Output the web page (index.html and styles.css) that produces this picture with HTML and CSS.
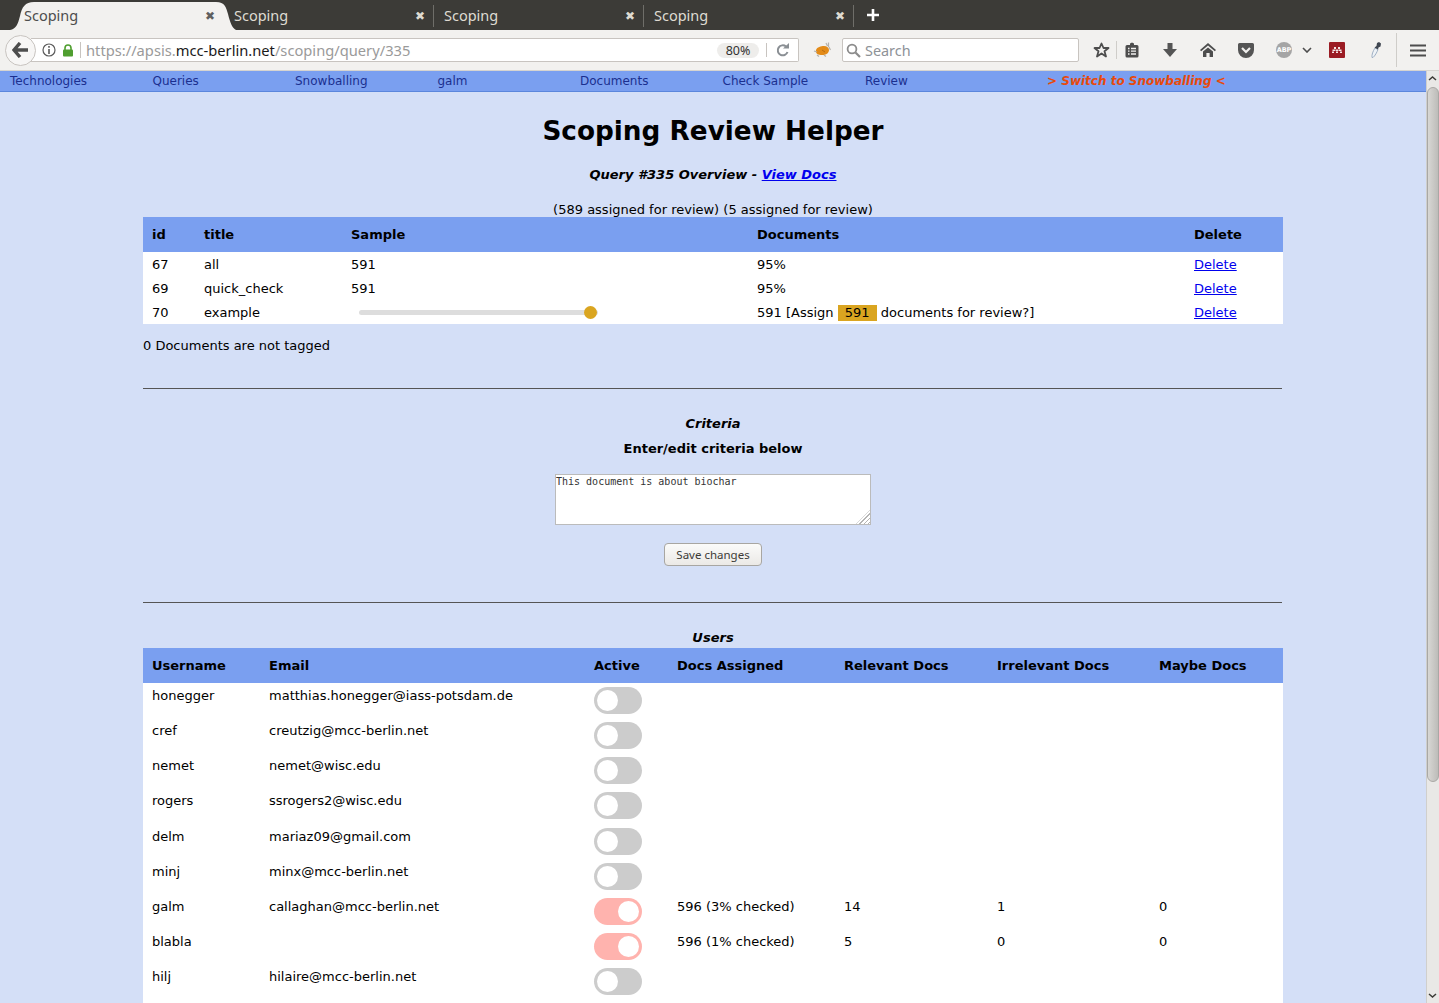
FILE: index.html
```html
<!DOCTYPE html>
<html lang="en">
<head>
    <meta charset="UTF-8">
    <title>Scoping</title>
    <link rel="stylesheet" href="styles.css">
</head>
<body>
    <div class="tabbar">
        <div class="tab active">
            <svg class="tab-shape" width="226" height="30" viewBox="0 0 226 30"><path d="M0 30C6 29 8 24 10 16C12 7 15 2 24 2H206C215 2 216 7 218 14C220 22 222 28 226 30Z" fill="#f2f1ef"/></svg>
            <span class="tab-title">Scoping</span><span class="tab-close">✖</span>
        </div>
        <div class="tab"><span class="tab-title">Scoping</span><span class="tab-close">✖</span></div>
        <div class="tab"><span class="tab-title">Scoping</span><span class="tab-close">✖</span></div>
        <div class="tab"><span class="tab-title">Scoping</span><span class="tab-close">✖</span></div>
        <svg class="new-tab" width="14" height="14" viewBox="0 0 14 14"><path d="M7 1V13M1 7H13" stroke="#fff" stroke-width="2.6"/></svg>
    </div>

    <div class="toolbar">
        <div class="back">
            <svg width="18" height="16" viewBox="0 0 18 16"><path d="M8 1L2 8L8 15M2 8H16" fill="none" stroke="#4d4d4d" stroke-width="3.4"/></svg>
        </div>
        <div class="urlbar">
            <svg class="info" width="14" height="14" viewBox="0 0 14 14"><circle cx="7" cy="7" r="6" fill="none" stroke="#5a5a5a" stroke-width="1.2"/><path d="M7 6V11M7 3V4.8" stroke="#5a5a5a" stroke-width="1.6"/></svg>
            <svg class="lock" width="12" height="13" viewBox="0 0 12 13"><path d="M3 6V4A3 3 0 0 1 9 4V6" fill="none" stroke="#4f9e2f" stroke-width="1.6"/><rect x="1" y="5.5" width="10" height="7" rx="1" fill="#4f9e2f"/></svg>
            <span class="url"><span class="url-dim">https://apsis.</span>mcc-berlin.net<span class="url-dim">/scoping/query/335</span></span>
            <span class="zoom-pill">80%</span>
            <svg class="reload" width="16" height="14" viewBox="0 0 16 14"><path d="M12.5 9A5 5 0 1 1 11 3.5" fill="none" stroke="#8a8f94" stroke-width="2"/><path d="M8 5.5H14V0Z" fill="#8a8f94"/></svg>
        </div>
        <svg class="fox" width="18" height="16" viewBox="0 0 18 16"><path d="M13 1L14.500 4M15.500 0.500L15.500 5M16 5L17.500 8" fill="none" stroke="#b5b2ad" stroke-width="1.200"/><path d="M3 8C4 5 8 4 11 4C14 4 16 6 16 8C16 11 13 13 9 13C5.500 13 2 12 3 8Z" fill="#e38b18"/><path d="M1 9L4 10M4 13L6 14.500M11 13L13 14.500" stroke="#b5b2ad" stroke-width="1.200"/><path d="M9 8L12 10" stroke="#b96d10" stroke-width="1"/></svg>
        <div class="searchbar">
            <svg width="15" height="15" viewBox="0 0 15 15"><circle cx="6" cy="6" r="4.4" fill="none" stroke="#8c8c8c" stroke-width="1.8"/><path d="M9.5 9.5L14 14" stroke="#8c8c8c" stroke-width="2.2"/></svg>
            <span>Search</span>
        </div>
        <svg class="star" width="17" height="16" viewBox="0 0 17 16"><path d="M8.5 1.5L10.5 6H15.5L11.5 9.2L13 14.5L8.5 11.4L4 14.5L5.5 9.2L1.5 6H6.5Z" fill="none" stroke="#4d4d4d" stroke-width="1.8" stroke-linejoin="round"/></svg>
        <span class="tool-sep"></span>
        <svg class="reader" width="14" height="16" viewBox="0 0 14 16"><path d="M2 3H5V1.500L7 0.500L9 1.500V3H12A1.500 1.500 0 0 1 13.500 4.500V14A1.500 1.500 0 0 1 12 15.500H2A1.500 1.500 0 0 1 0.500 14V4.500A1.500 1.500 0 0 1 2 3Z" fill="#4d4d4d"/><path d="M3 6.500H4.500M6 6.500H11M3 9.200H4.500M6 9.200H11M3 12H4.500M6 12H11" stroke="#f2f1ef" stroke-width="1.300"/></svg>
        <svg class="download" width="14" height="14" viewBox="0 0 14 14"><path d="M4.500 0H9.500V6H14L7 14L0 6H4.500Z" fill="#555"/></svg>
        <svg class="home" width="16" height="14" viewBox="0 0 16 14"><path d="M8 0L16 7L14.800 8.200L8 2.400L1.200 8.200L0 7Z" fill="#4d4d4d"/><path d="M3 8.600L8 4.400L13 8.600V14H9.600V10H6.400V14H3Z" fill="#4d4d4d"/></svg>
        <svg class="pocket" width="16" height="15" viewBox="0 0 16 15"><path d="M1.500 0H14.500A1.500 1.500 0 0 1 16 1.500V7A8 8 0 0 1 0 7V1.500A1.500 1.500 0 0 1 1.500 0Z" fill="#555"/><path d="M4 5L8 9L12 5" fill="none" stroke="#f2f1ef" stroke-width="2.200"/></svg>
        <span class="abp">ABP</span>
        <svg class="chevron" width="10" height="6" viewBox="0 0 10 6"><path d="M1 1L5 5L9 1" fill="none" stroke="#4d4d4d" stroke-width="1.600"/></svg>
        <svg class="ublock" width="16" height="16" viewBox="0 0 16 16"><rect width="16" height="16" rx="1" fill="#9b1c24"/><path d="M5 5H7V7H5ZM9 5H11V7H9ZM3.500 7.500H6.500V9H3.500ZM7 7.500H9V9H7ZM9.500 7.500H12.500V9H9.500ZM3 9.500H5V11H3ZM7 9.500H9V11H7ZM11 9.500H13V11H11Z" fill="#f4e6e6"/></svg>
        <svg class="dropper" width="12" height="18" viewBox="0 0 12 18"><path d="M2 16.500C1.500 14 3 10 5 7L8 8.500C7 11 5 15 3 16.500Z" fill="#eef2f6" stroke="#9fb0c4"/><path d="M4.500 6.500L6.500 5L7 2L9 1L11 2.500L10.500 5.500L8.500 6.500L8 8.500Z" fill="#3f4650"/></svg>
        <span class="tool-sep tall"></span>
        <svg class="menu" width="16" height="13" viewBox="0 0 16 13"><path d="M0 1.500H16M0 6.500H16M0 11.500H16" stroke="#4d4d4d" stroke-width="2.200"/></svg>
    </div>

    <div class="viewport">
        <div class="page">
            <ul class="nav">
                <li><a href="#">Technologies</a></li>
                <li><a href="#">Queries</a></li>
                <li><a href="#">Snowballing</a></li>
                <li><a href="#">galm</a></li>
                <li><a href="#">Documents</a></li>
                <li><a href="#">Check Sample</a></li>
                <li><a href="#">Review</a></li>
                <li class="switch"><a href="#">&gt; Switch to Snowballing &lt;</a></li>
            </ul>

            <div class="content">
                <h1>Scoping Review Helper</h1>
                <p class="subtitle">Query #335 Overview - <a href="#">View Docs</a></p>
                <p class="assigned">(589 assigned for review) (5 assigned for review)</p>

                <table class="data tags">
                    <colgroup>
                        <col class="c-id"><col class="c-title"><col class="c-sample"><col class="c-docs"><col class="c-del">
                    </colgroup>
                    <thead>
                        <tr><th>id</th><th>title</th><th>Sample</th><th>Documents</th><th>Delete</th></tr>
                    </thead>
                    <tbody>
                        <tr><td>67</td><td>all</td><td>591</td><td>95%</td><td><a href="#">Delete</a></td></tr>
                        <tr><td>69</td><td>quick_check</td><td>591</td><td>95%</td><td><a href="#">Delete</a></td></tr>
                        <tr>
                            <td>70</td><td>example</td>
                            <td><div class="slider"><span class="thumb"></span></div></td>
                            <td>591 [Assign <span class="badge">591</span> documents for review?]</td>
                            <td><a href="#">Delete</a></td>
                        </tr>
                    </tbody>
                </table>

                <p class="untagged">0 Documents are not tagged</p>
                <hr class="first">

                <p class="section-title">Criteria</p>
                <p class="section-sub">Enter/edit criteria below</p>
                <div class="criteria-wrap">
                    <textarea class="criteria">This document is about biochar</textarea>
                </div>
                <button class="save">Save changes</button>
                <hr class="second">

                <p class="section-title users-title">Users</p>
                <table class="data users">
                    <colgroup>
                        <col class="u-name"><col class="u-email"><col class="u-active"><col class="u-docs"><col class="u-rel"><col class="u-irr"><col class="u-maybe">
                    </colgroup>
                    <thead>
                        <tr><th>Username</th><th>Email</th><th>Active</th><th>Docs Assigned</th><th>Relevant Docs</th><th>Irrelevant Docs</th><th>Maybe Docs</th></tr>
                    </thead>
                    <tbody>
                        <tr><td>honegger</td><td>matthias.honegger@iass-potsdam.de</td><td><span class="toggle"></span></td><td></td><td></td><td></td><td></td></tr>
                        <tr><td>cref</td><td>creutzig@mcc-berlin.net</td><td><span class="toggle"></span></td><td></td><td></td><td></td><td></td></tr>
                        <tr><td>nemet</td><td>nemet@wisc.edu</td><td><span class="toggle"></span></td><td></td><td></td><td></td><td></td></tr>
                        <tr><td>rogers</td><td>ssrogers2@wisc.edu</td><td><span class="toggle"></span></td><td></td><td></td><td></td><td></td></tr>
                        <tr><td>delm</td><td>mariaz09@gmail.com</td><td><span class="toggle"></span></td><td></td><td></td><td></td><td></td></tr>
                        <tr><td>minj</td><td>minx@mcc-berlin.net</td><td><span class="toggle"></span></td><td></td><td></td><td></td><td></td></tr>
                        <tr><td>galm</td><td>callaghan@mcc-berlin.net</td><td><span class="toggle on"></span></td><td>596 (3% checked)</td><td>14</td><td>1</td><td>0</td></tr>
                        <tr><td>blabla</td><td></td><td><span class="toggle on"></span></td><td>596 (1% checked)</td><td>5</td><td>0</td><td>0</td></tr>
                        <tr><td>hilj</td><td>hilaire@mcc-berlin.net</td><td><span class="toggle"></span></td><td></td><td></td><td></td><td></td></tr>
                        <tr><td></td><td></td><td></td><td></td><td></td><td></td><td></td></tr>
                    </tbody>
                </table>
            </div>
        </div>

        <div class="scrollbar">
            <svg width="13" height="16" viewBox="0 0 13 16"><path d="M3 9L6.500 6L10 9" fill="none" stroke="#3c3b37" stroke-width="1.500"/></svg>
            <div class="scroll-track"><div class="scroll-thumb"></div></div>
            <svg width="13" height="16" viewBox="0 0 13 16"><path d="M3 7L6.500 10L10 7" fill="none" stroke="#3c3b37" stroke-width="1.500"/></svg>
        </div>
    </div>
</body>
</html>
```

FILE: styles.css
```css
html, body { margin: 0; padding: 0; height: 100%; overflow: hidden; }

body {
    display: flex;
    flex-direction: column;
    font-family: "DejaVu Sans", Verdana, sans-serif;
    font-size: 13px;
    color: #000;
    background: #d4dff7;
}

/* browser chrome */
.tabbar {
    display: flex;
    align-items: center;
    height: 30px;
    flex: none;
    padding-left: 14px;
    background: #3c3b37;
    font-family: "Noto Sans", sans-serif;
    font-size: 14.5px;
    color: #dfdbd2;
}

.tab {
    position: relative;
    display: flex;
    align-items: center;
    justify-content: space-between;
    box-sizing: border-box;
    width: 210px;
    height: 30px;
    padding: 0 9px 0 10px;
}

.tab + .tab::after {
    content: "";
    position: absolute;
    right: 0;
    top: 5px;
    height: 22px;
    width: 1px;
    background: #6f6e69;
}

.tab.active { color: #4d4d4d; }
.tab-shape { position: absolute; left: -4px; top: 0; }
.tab-title { position: relative; }
.tab-close { position: relative; font-size: 12px; color: #dfdbd2; }
.tab.active .tab-close { color: #5f5f5f; }
.new-tab { margin-left: 12px; }

.toolbar {
    display: flex;
    align-items: center;
    box-sizing: border-box;
    height: 41px;
    flex: none;
    background: #f2f1ef;
    border-bottom: 1px solid #d6d4d0;
    font-family: "Noto Sans", sans-serif;
    color: #4d4d4d;
}

.toolbar svg { flex: none; }

.back {
    display: flex;
    align-items: center;
    justify-content: center;
    box-sizing: border-box;
    width: 31px;
    height: 31px;
    margin-left: 5px;
    border: 1px solid #c8c4c0;
    border-radius: 50%;
    background: #f7f6f5;
    position: relative;
    z-index: 1;
}

.urlbar {
    display: flex;
    align-items: center;
    box-sizing: border-box;
    width: 768px;
    height: 24px;
    margin-left: -5px;
    padding-left: 11px;
    background: #fff;
    border: 1px solid #c8c4c0;
    border-left: 0;
    border-radius: 0 2px 2px 0;
}

.lock { margin-left: 6px; }

.url {
    margin-left: 6px;
    padding-left: 5px;
    border-left: 1px solid #c8c4c0;
    width: 630px;
    font-size: 14.7px;
    line-height: 16px;
    white-space: nowrap;
    color: #1a1a1a;
}

.url-dim { color: #9a9a9a; }

.zoom-pill {
    box-sizing: border-box;
    width: 42px;
    height: 15px;
    border-radius: 8px;
    background: #eeedeb;
    text-align: center;
    font-size: 12.5px;
    line-height: 15px;
    color: #333;
    margin-left: 1px;
}

.reload {
    margin-left: 7px;
    padding-left: 8px;
    border-left: 1px solid #c8c4c0;
}

.fox { margin-left: 14px; }

.searchbar {
    display: flex;
    align-items: center;
    gap: 4px;
    box-sizing: border-box;
    width: 237px;
    height: 24px;
    margin-left: 11px;
    padding-left: 3px;
    background: #fff;
    border: 1px solid #c8c4c0;
    border-radius: 2px;
    font-size: 14.4px;
    color: #8e9297;
}

.star { margin-left: 14px; }

.tool-sep {
    width: 1px;
    height: 18px;
    margin-left: 6px;
    background: #cfcdc9;
}

.tool-sep.tall { height: 34px; margin-left: 14px; }

.reader { margin-left: 8px; }
.download { margin-left: 24px; }
.home { margin-left: 23px; }
.pocket { margin-left: 22px; }

.abp {
    width: 16px;
    height: 16px;
    margin-left: 22px;
    border-radius: 50%;
    background: #a5a5a5;
    color: #fff;
    font-family: "DejaVu Sans", sans-serif;
    font-size: 6.5px;
    font-weight: bold;
    line-height: 16px;
    text-align: center;
}

.chevron { margin-left: 10px; }
.ublock { margin-left: 17px; }
.dropper { margin-left: 25px; }
.menu { margin-left: 13px; }

/* page */
.viewport {
    display: flex;
    flex: 1;
    min-height: 0;
}

.page {
    flex: 1;
    min-width: 0;
    overflow: hidden;
}

.scrollbar {
    display: flex;
    flex-direction: column;
    width: 13px;
    flex: none;
    background: #e9e8e6;
    border-left: 1px solid #d0cfcc;
    box-sizing: border-box;
}

.scrollbar svg { flex: none; margin-left: -1px; }
.scroll-track { flex: 1; }

.scroll-thumb {
    height: 695px;
    box-sizing: border-box;
    border: 1px solid #a9a8a5;
    border-radius: 6px;
    background: linear-gradient(to right, #d8d7d4, #bdbcb9);
}

.nav {
    display: flex;
    box-sizing: border-box;
    height: 21px;
    margin: 0;
    padding: 0 0 0 10px;
    list-style: none;
    background: #7a9ff0;
    border-bottom: 1px solid #5b86dc;
    line-height: 20px;
    font-size: 12px;
}

.nav li { width: 142.5px; flex: none; }
.nav a { color: #1b2f8f; text-decoration: none; }
.nav .switch { margin-left: 39.5px; width: auto; }
.nav .switch a { color: #e84a0c; font-weight: bold; font-style: italic; }

.content {
    width: 1140px;
    margin-left: 143px;
}

h1 {
    margin: 0;
    padding-top: 21px;
    font-size: 26.3px;
    line-height: 37px;
    text-align: center;
}

.subtitle {
    margin: 17px 0 0;
    font-weight: bold;
    font-style: italic;
    line-height: 16px;
    text-align: center;
}

.subtitle a { color: #0000ee; }

.assigned {
    margin: 19px 0 -1px;
    line-height: 16px;
    text-align: center;
}

.data {
    width: 1140px;
    table-layout: fixed;
    border-collapse: collapse;
    background: #fff;
}

.data th {
    height: 35px;
    padding: 0 9px;
    background: #7a9ff0;
    text-align: left;
    font-weight: bold;
}

.data td {
    padding: 5px 9px 3px;
    line-height: 16px;
    vertical-align: top;
    white-space: nowrap;
}

.data a { color: #0000ee; }

.c-id { width: 52px; }
.c-title { width: 147px; }
.c-sample { width: 406px; }
.c-docs { width: 437px; }
.c-del { width: 98px; }

.slider {
    position: relative;
    width: 239px;
    height: 5px;
    margin: 5px 0 0 8px;
    border-radius: 3px;
    background: #dddddd;
}

.thumb {
    position: absolute;
    right: 0;
    top: -4px;
    width: 13px;
    height: 13px;
    margin-right: 1px;
    border-radius: 50%;
    background: #daa520;
}

.badge {
    display: inline-block;
    width: 39px;
    background: #daa520;
    text-align: center;
}

.untagged {
    margin: 14px 0 0;
    line-height: 16px;
}

hr {
    height: 1px;
    margin: 0;
    border: 0;
    background: #555;
    width: 1139px;
}

.first { margin-top: 34px; }

.section-title {
    margin: 27px 0 0;
    font-weight: bold;
    font-style: italic;
    line-height: 16px;
    text-align: center;
}

.section-sub {
    margin: 9px 0 0;
    font-weight: bold;
    line-height: 16px;
    text-align: center;
}

.criteria-wrap {
    position: relative;
    width: 316px;
    height: 51px;
    margin: 17px auto 0;
}

/* corner grip */
.criteria-wrap::after {
    content: "";
    position: absolute;
    right: 1px;
    bottom: 1px;
    width: 14px;
    height: 14px;
    clip-path: polygon(100% 0, 100% 100%, 0 100%);
    background: repeating-linear-gradient(135deg, #b5b5b5 0, #b5b5b5 1px, #fff 1px, #fff 3px);
}

.criteria {
    display: block;
    box-sizing: border-box;
    width: 316px;
    height: 51px;
    margin: 0;
    padding: 1px 0;
    background: #fff;
    border: 1px solid #bbb;
    font-family: "DejaVu Sans Mono", monospace;
    font-size: 10px;
    color: #333;
    resize: none;
}

.save {
    display: block;
    box-sizing: border-box;
    width: 98px;
    height: 23px;
    margin: 18px auto 0;
    padding: 0;
    background: linear-gradient(#fbfbfa, #ebe9e6);
    border: 1px solid #a8a6a2;
    border-radius: 4px;
    font-family: "Noto Sans", sans-serif;
    font-size: 11.5px;
    color: #3c3b37;
}

.second { margin-top: 36px; }

.users-title { margin-top: 27px; }
.users { margin-top: 2px; }
.users td { height: 27.15px; }

.u-name { width: 117px; }
.u-email { width: 325px; }
.u-active { width: 83px; }
.u-docs { width: 167px; }
.u-rel { width: 153px; }
.u-irr { width: 162px; }
.u-maybe { width: 133px; }

.toggle {
    display: block;
    position: relative;
    width: 48px;
    height: 27px;
    margin-top: -1px;
    border-radius: 14px;
    background: #cccccc;
}

.toggle::before {
    content: "";
    position: absolute;
    left: 3px;
    top: 3px;
    width: 21px;
    height: 21px;
    border-radius: 50%;
    background: #fff;
}

.toggle.on { background: #ffb3ae; }
.toggle.on::before { left: 24px; }
```
